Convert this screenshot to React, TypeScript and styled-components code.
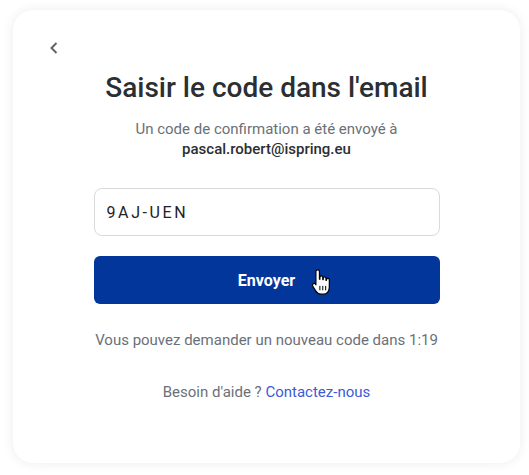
import styled, { createGlobalStyle } from 'styled-components';

const GlobalStyle = createGlobalStyle`
  html, body {
    margin: 0;
    padding: 0;
    background: #ffffff;
    font-family: Roboto, 'Liberation Sans', sans-serif;
  }
`;

const Page = styled.div`
  padding: 10px 9px 12px 13px;
`;

const Card = styled.div`
  position: relative;
  width: 507px;
  height: 453px;
  box-sizing: border-box;
  background: #fff;
  border-radius: 20px;
  box-shadow: 0 0 12px rgba(0, 0, 0, 0.08);
  display: flex;
  flex-direction: column;
  align-items: center;
  padding: 28px 0 0;
`;

const TopBar = styled.div`
  align-self: stretch;
  display: flex;
  padding-left: 34px;
  height: 20px;
  align-items: center;
`;

const BackButton = styled.button`
  border: none;
  background: none;
  padding: 0;
  width: 14px;
  height: 18px;
  display: flex;
  align-items: center;
  justify-content: center;
  color: #5f6369;
  cursor: pointer;
`;

const Title = styled.h1`
  margin: 13px 0 0;
  font-size: 28px;
  font-weight: 500;
  line-height: 34px;
  color: #2b2f33;
`;

const Subtitle = styled.p`
  margin: 14px 0 0;
  font-size: 15px;
  line-height: 20px;
  color: #6b7078;
  text-align: center;
`;

const Email = styled.span`
  display: block;
  font-weight: 500;
  color: #2b2f33;
`;

const Form = styled.div`
  margin-top: 29px;
  width: 346px;
  display: flex;
  flex-direction: column;
  gap: 20px;
`;

const CodeInput = styled.input`
  box-sizing: border-box;
  width: 100%;
  height: 48px;
  border: 1px solid #d9dadc;
  border-radius: 8px;
  padding: 0 12px;
  font-family: Roboto, 'Liberation Sans', sans-serif;
  font-size: 16px;
  letter-spacing: 2.6px;
  color: #1f2226;
  outline: none;
`;

const SubmitButton = styled.button`
  position: relative;
  height: 48px;
  border: none;
  border-radius: 6px;
  background: #02369a;
  color: #fff;
  font-family: Roboto, 'Liberation Sans', sans-serif;
  font-size: 16px;
  font-weight: 700;
  cursor: pointer;
`;

const Cursor = styled.svg`
  position: absolute;
  left: 217px;
  top: 12px;
`;

const Timer = styled.p`
  margin: 26px 0 0;
  font-size: 15px;
  line-height: 20px;
  color: #6b7078;
`;

const Help = styled.p`
  margin: 32px 0 0;
  font-size: 15px;
  line-height: 20px;
  color: #6b7078;
`;

const Link = styled.a`
  color: #3c5bd8;
  text-decoration: none;
`;

export default function App() {
  return (
    <Page>
      <GlobalStyle />
      <Card>
        <TopBar>
          <BackButton aria-label="Retour">
            <svg width="10" height="14" viewBox="0 0 10 14">
              <path d="M7.5 2 L2.5 7 L7.5 12" fill="none" stroke="currentColor" strokeWidth="2" />
            </svg>
          </BackButton>
        </TopBar>
        <Title>Saisir le code dans l'email</Title>
        <Subtitle>
          Un code de confirmation a été envoyé à
          <Email>pascal.robert@ispring.eu</Email>
        </Subtitle>
        <Form>
          <CodeInput defaultValue="9AJ-UEN" />
          <SubmitButton>
            Envoyer
            <Cursor width="20" height="28" viewBox="0 0 18 25">
              <path
                d="M6 1.5 C7 1.5 7.6 2.2 7.6 3 L7.6 10 L8 10 L8 8.3 C8 7.6 8.6 7 9.3 7 C10 7 10.6 7.6 10.6 8.3 L10.6 10.3 L11 10.3 L11 9.2 C11 8.5 11.6 8 12.3 8 C13 8 13.5 8.5 13.5 9.2 L13.5 11 L13.9 11 L13.9 10.4 C13.9 9.7 14.5 9.2 15.2 9.2 C15.9 9.2 16.5 9.7 16.5 10.4 L16.5 17 C16.5 20.5 14.5 23.5 11.2 23.5 L9 23.5 C6.8 23.5 5.5 22.4 4.4 20.7 L1.6 16.3 C1.1 15.5 1.3 14.6 2 14.1 C2.7 13.6 3.6 13.8 4.1 14.5 L4.4 15 L4.4 3 C4.4 2.2 5 1.5 6 1.5 Z"
                fill="#fff"
                stroke="#000"
                strokeWidth="1.1"
                strokeLinejoin="round"
              />
              <path d="M8 16 L8 20 M10.6 16 L10.6 20 M13.2 16 L13.2 20" stroke="#000" strokeWidth="0.9" />
            </Cursor>
          </SubmitButton>
        </Form>
        <Timer>Vous pouvez demander un nouveau code dans 1:19</Timer>
        <Help>
          Besoin d'aide ? <Link href="#">Contactez-nous</Link>
        </Help>
      </Card>
    </Page>
  );
}
